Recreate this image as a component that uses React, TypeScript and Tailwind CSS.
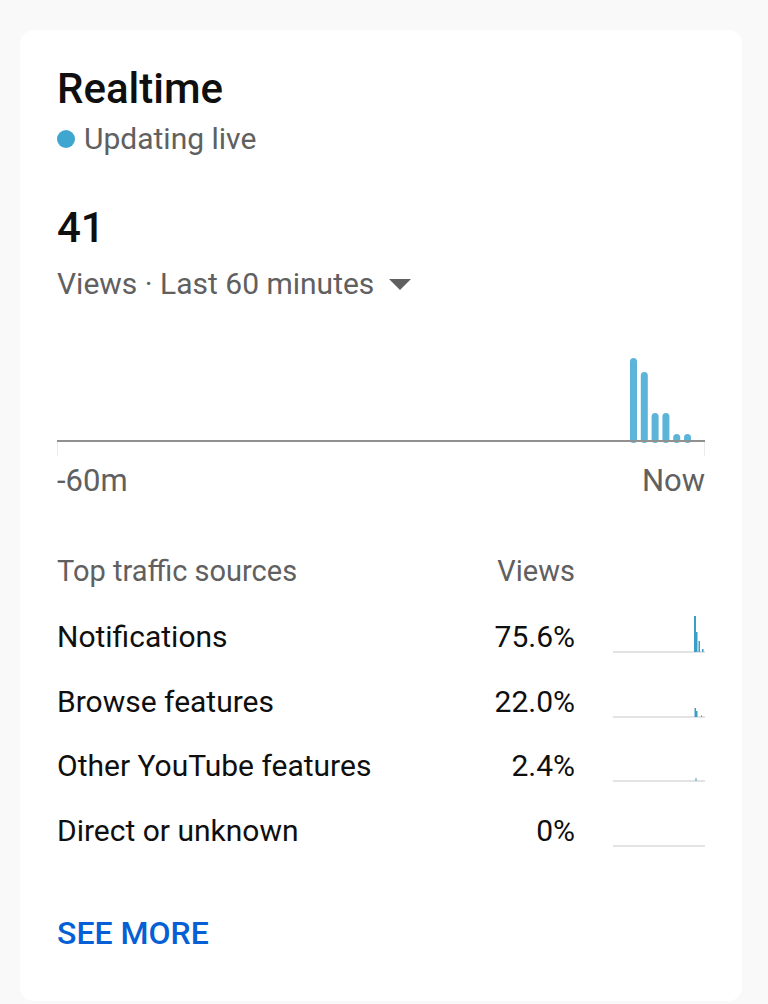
const FONT = "font-['Roboto','Liberation_Sans',sans-serif]"

// views per minute over the last hour (index 0 = 60 minutes ago)
const minuteHeights: Record<number, number> = { 53: 82, 54: 68, 55: 27, 56: 27, 57: 6, 58: 6 }

type Spark = { x: number; w: number; h: number }

const sources: { name: string; share: string; spark: Spark[] }[] = [
  {
    name: 'Notifications',
    share: '75.6%',
    spark: [
      { x: 81, w: 2, h: 36 },
      { x: 83, w: 1.5, h: 20 },
      { x: 85.5, w: 1.5, h: 11 },
      { x: 89, w: 1.5, h: 3 },
    ],
  },
  {
    name: 'Browse features',
    share: '22.0%',
    spark: [
      { x: 81.5, w: 1.5, h: 9 },
      { x: 83, w: 1.5, h: 6 },
      { x: 88, w: 1, h: 1.5 },
    ],
  },
  { name: 'Other YouTube features', share: '2.4%', spark: [{ x: 82.5, w: 1, h: 3 }] },
  { name: 'Direct or unknown', share: '0%', spark: [] },
]

function LiveChart() {
  const width = 648
  const pitch = width / 60
  const base = 90
  return (
    <svg width={width} height={106} viewBox={`0 0 ${width} 106`} className="block">
      {Array.from({ length: 60 }, (_, i) => {
        const h = minuteHeights[i]
        if (!h) return null
        const x = i * pitch + 0.6
        return <rect key={i} x={x} y={base - h} width={7} height={h + 3} rx={3.5} fill="#5cb5d9" />
      })}
      <rect x={0} y={base} width={width} height={2} fill="#909090" />
      <rect x={0} y={base + 2} width={1} height={14} fill="#ececec" />
      <rect x={width - 1} y={base + 2} width={1} height={14} fill="#ececec" />
    </svg>
  )
}

function Sparkline({ bars }: { bars: Spark[] }) {
  return (
    <svg width={92} height={40} viewBox="0 0 92 40" className="block">
      <rect x={0} y={36} width={92} height={2} fill="#e3e3e3" />
      {bars.map((b, i) => (
        <rect key={i} x={b.x} y={37 - b.h} width={b.w} height={b.h} fill="#3b9ec7" />
      ))}
    </svg>
  )
}

export default function App() {
  return (
    <div className={`min-h-[1004px] bg-[#f9f9f9] pt-[30px] pl-[20px] ${FONT}`}>
      <div className="w-[722px] rounded-[14px] bg-white px-[37px] pt-[34px] pb-[50px]">
        <h2 className="text-[42px] leading-[50px] font-medium text-[#0f0f0f]">Realtime</h2>
        <div className="mt-[7px] flex items-center gap-[9px] text-[30px] leading-[36px] text-[#606060]">
          <span className="h-[18px] w-[18px] rounded-full bg-[#3fa6d0]" />
          <span>Updating live</span>
        </div>

        <div className="mt-[46px] text-[42px] leading-[50px] font-medium text-[#0f0f0f]">41</div>
        <button className="mt-[13px] flex items-center text-[30px] leading-[36px] text-[#606060]">
          <span>Views · Last 60 minutes</span>
          <svg width="22" height="11" viewBox="0 0 22 11" className="ml-[15px]">
            <path d="M0 0h22L11 11z" fill="#606060" />
          </svg>
        </button>

        <div className="mt-[48px]">
          <LiveChart />
        </div>
        <div className="mt-[7px] flex justify-between text-[31px] leading-[36px] text-[#606060]">
          <span>-60m</span>
          <span>Now</span>
        </div>

        <div className="mt-[55px] grid grid-cols-[1fr_auto_92px] items-center gap-x-[38px] text-[29px] leading-[34px] text-[#606060]">
          <span>Top traffic sources</span>
          <span className="text-right">Views</span>
          <span />
        </div>

        <div className="mt-[31px] flex flex-col gap-[28.5px]">
          {sources.map((s) => (
            <div
              key={s.name}
              className="grid h-[36px] grid-cols-[1fr_auto_92px] items-start gap-x-[38px] text-[30px] leading-[36px] text-[#0f0f0f]"
            >
              <span>{s.name}</span>
              <span className="text-right">{s.share}</span>
              <div className="-mt-[4px]">
                <Sparkline bars={s.spark} />
              </div>
            </div>
          ))}
        </div>

        <button className="mt-[66px] block text-[32px] leading-[36px] font-medium text-[#065fd4]">
          SEE MORE
        </button>
      </div>
    </div>
  )
}
